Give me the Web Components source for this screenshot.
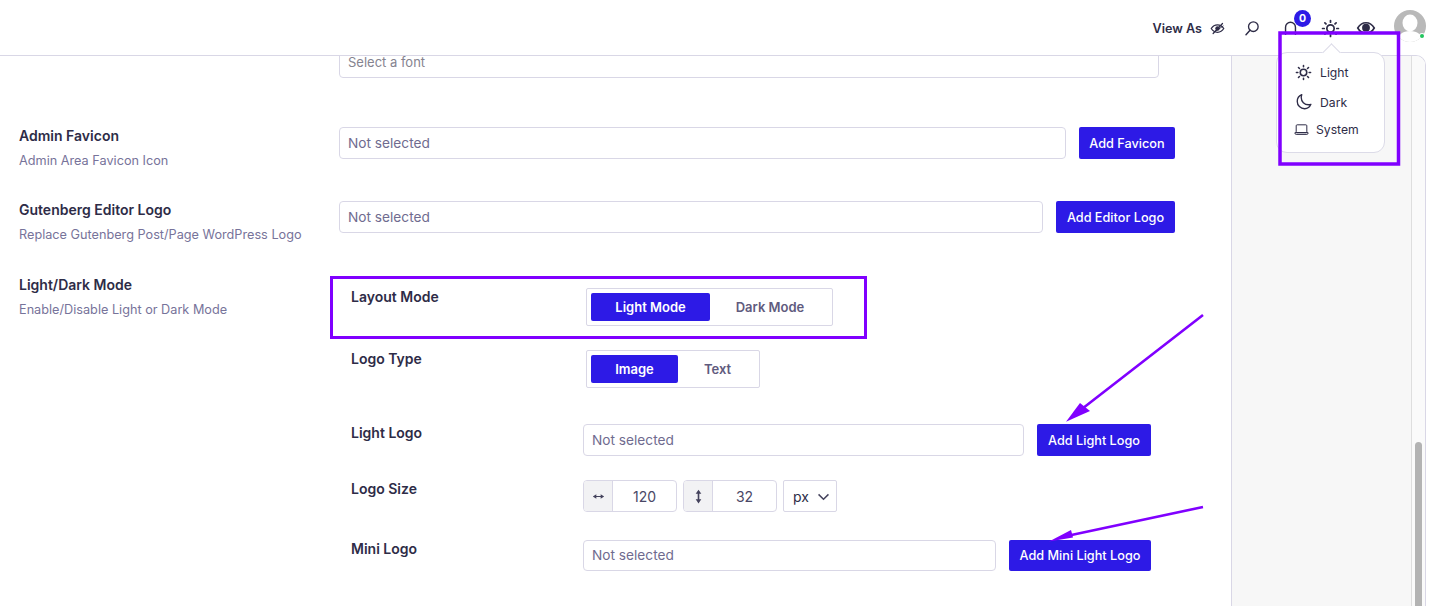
<!DOCTYPE html>
<html lang="en">
<head>
<meta charset="utf-8">
<title>Settings</title>
<style>
  html, body { margin: 0; padding: 0; background: #fff; }
  body { width: 1438px; height: 606px; overflow: hidden; font-family: Inter, "Liberation Sans", sans-serif; color: #2e2c47; }
</style>
</head>
<body>
<app-shell>
  <top-bar slot="top"></top-bar>
  <theme-menu slot="top"></theme-menu>

  <settings-list slot="main">
    <setting-row class="clipped">
      <file-field placeholder="Select a font" faint style="margin-right:16px"></file-field>
    </setting-row>
    <setting-row label="Admin Favicon" desc="Admin Area Favicon Icon">
      <file-field placeholder="Not selected" button="Add Favicon" bw="96"></file-field>
    </setting-row>
    <setting-row label="Gutenberg Editor Logo" desc="Replace Gutenberg Post/Page WordPress Logo" style="margin-bottom:1px">
      <file-field placeholder="Not selected" button="Add Editor Logo" bw="119"></file-field>
    </setting-row>
    <setting-row label="Light/Dark Mode" desc="Enable/Disable Light or Dark Mode">
      <div style="padding:12px 24px 0 12px">
        <sub-row label="Layout Mode" gap="24">
          <seg-toggle first="Light Mode" second="Dark Mode" a="119" b="118"></seg-toggle>
        </sub-row>
        <sub-row label="Logo Type" gap="36">
          <seg-toggle first="Image" second="Text" a="87" b="77"></seg-toggle>
        </sub-row>
        <sub-row label="Light Logo" gap="24">
          <file-field placeholder="Not selected" button="Add Light Logo" bw="114"></file-field>
        </sub-row>
        <sub-row label="Logo Size" gap="28">
          <size-field></size-field>
        </sub-row>
        <sub-row label="Mini Logo" gap="0">
          <file-field placeholder="Not selected" button="Add Mini Light Logo" bw="142" style="height:31px"></file-field>
        </sub-row>
      </div>
    </setting-row>
  </settings-list>

  <side-panel slot="side"></side-panel>
  <annot-layer slot="top"></annot-layer>
</app-shell>

<script>
const ICONS = {
  eyeoff: '<path d="M2 12s3.600-6 10-6 10 6 10 6-3.600 6-10 6S2 12 2 12Z" fill="none" stroke="currentColor" stroke-width="2"/><circle cx="12" cy="12" r="3.600" fill="currentColor"/><path d="M5 20 20 4" stroke="currentColor" stroke-width="2" stroke-linecap="round"/><path d="M8 17 21 8" stroke="currentColor" stroke-width="1.400" stroke-linecap="round"/>',
  search: '<circle cx="14" cy="10" r="7.200" fill="none" stroke="currentColor" stroke-width="2"/><path d="M9 15.500 3 22" stroke="currentColor" stroke-width="2.200" stroke-linecap="round"/>',
  bell: '<path d="M5 24v-11a7 7 0 0 1 14 0v11" fill="none" stroke="currentColor" stroke-width="2"/>',
  sun: '<circle cx="12" cy="12" r="4.600" fill="none" stroke="currentColor" stroke-width="2.200"/><path d="M12 2v2M12 20v2M2 12h2M20 12h2M4.900 4.900l1.400 1.400M17.700 17.700l1.400 1.400M4.900 19.100l1.400-1.400M17.700 6.300l1.400-1.400" fill="none" stroke="currentColor" stroke-width="2.200" stroke-linecap="round"/>',
  eye: '<path d="M1 12s4-7 11-7 11 7 11 7-4 7-11 7S1 12 1 12Z" fill="none" stroke="currentColor" stroke-width="2.200"/><circle cx="12" cy="11.500" r="5.200" fill="currentColor"/>',
  moon: '<path d="M21.200 15.100A9.700 9.700 0 0 1 18 15.700c-5.400 0-9.700-4.300-9.700-9.700 0-1.300.3-2.600.7-3.700A9.700 9.700 0 0 0 3 11.300C3 16.600 7.400 21 12.800 21a9.700 9.700 0 0 0 8.400-5.900Z" fill="none" stroke="currentColor" stroke-width="1.800" stroke-linejoin="round"/>',
  laptop: '<rect x="3.500" y="4.500" width="17" height="12.500" rx="1.500" fill="none" stroke="currentColor" stroke-width="1.600"/><path d="M1.500 17h21v.8a2 2 0 0 1-2 2h-17a2 2 0 0 1-2-2Z" fill="none" stroke="currentColor" stroke-width="1.600" stroke-linejoin="round"/>',
  hsize: '<path d="M6 12h12" stroke="currentColor" stroke-width="2"/><path d="M1.500 12 8 8v8ZM22.500 12 16 8v8Z" fill="currentColor"/>',
  vsize: '<path d="M12 6v12" stroke="currentColor" stroke-width="2.600"/><path d="M12 1 16.500 7.500h-9ZM12 23 7.500 16.500h9Z" fill="currentColor"/>',
  chevron: '<path d="M5 9l7 7 7-7" fill="none" stroke="currentColor" stroke-width="2"/>'
};

class UiIcon extends HTMLElement {
  constructor() {
    super();
    const size = this.getAttribute('size') || 16;
    this.attachShadow({ mode: 'open' }).innerHTML = `
      <style>:host { display: inline-flex; flex: none; width: ${size}px; height: ${size}px; } svg { width: 100%; height: 100%; display: block; overflow: visible; }</style>
      <svg viewBox="0 0 24 24">${ICONS[this.getAttribute('name')]}</svg>`;
  }
}
customElements.define('ui-icon', UiIcon);

class AppShell extends HTMLElement {
  constructor() {
    super();
    this.attachShadow({ mode: 'open' }).innerHTML = `
      <style>
        :host { display: block; position: relative; width: 1438px; height: 606px; overflow: hidden; }
        .body { display: flex; width: 1426px; height: 551px; box-sizing: border-box;
          border-top: 1px solid #d9d7e6; border-right: 1px solid #d9d7e6; border-top-right-radius: 10px; overflow: hidden; }
        .main { width: 1231px; flex: none; overflow: hidden; background: #fff; }
        .side { flex: 1; display: flex; min-width: 0; }
      </style>
      <slot name="top"></slot>
      <div class="body">
        <div class="main"><slot name="main"></slot></div>
        <div class="side"><slot name="side"></slot></div>
      </div>`;
  }
}
customElements.define('app-shell', AppShell);

class TopBar extends HTMLElement {
  constructor() {
    super();
    this.attachShadow({ mode: 'open' }).innerHTML = `
      <style>
        :host { display: flex; align-items: center; justify-content: flex-end; height: 55px; box-sizing: border-box;
          padding: 0 12px 0 0; color: #2e2c47; background: #fff; }
        .view { display: flex; align-items: center; gap: 8px; font-size: 12.600px; font-weight: 600; margin-right: 19px; margin-top: 1px; }
        .bell { position: relative; width: 12px; height: 16px; margin: 0 25px 0 24px; }
        .badge { position: absolute; left: 10px; top: -10px; width: 17px; height: 17px; border-radius: 50%;
          background: #2d1ae6; color: #fff; font-size: 10.500px; font-weight: 700; display: flex; align-items: center; justify-content: center; }
        .avatar { position: relative; width: 32px; height: 32px; margin: -3px 0 0 19px; }
        .avatar svg { display: block; width: 32px; height: 32px; }
        .dot { position: absolute; right: 2px; bottom: 4px; width: 4px; height: 4px; border-radius: 50%; background: #22c55e; box-shadow: 0 0 0 1px #fff; }
      </style>
      <div class="view">View As <ui-icon name="eyeoff" size="15"></ui-icon></div>
      <ui-icon name="search" size="16"></ui-icon>
      <div class="bell"><ui-icon name="bell" size="17" style="position:absolute;left:-2.500px;top:-1.750px"></ui-icon><span class="badge">0</span></div>
      <ui-icon name="sun" size="19" style="margin-top:1px"></ui-icon>
      <ui-icon name="eye" size="18" style="margin:1px 0 0 17px"></ui-icon>
      <div class="avatar">
        <svg viewBox="0 0 32 32">
          <defs><clipPath id="c"><circle cx="16" cy="16" r="16"/></clipPath></defs>
          <circle cx="16" cy="16" r="16" fill="#b9b9b9"/>
          <g clip-path="url(#c)" fill="#fff">
            <ellipse cx="16" cy="13" rx="7.500" ry="8.500"/>
            <path d="M3 34c0-9 5-13 13-13s13 4 13 13Z"/>
          </g>
        </svg>
        <span class="dot"></span>
      </div>`;
  }
}
customElements.define('top-bar', TopBar);

class ThemeMenu extends HTMLElement {
  constructor() {
    super();
    this.attachShadow({ mode: 'open' }).innerHTML = `
      <style>
        :host { display: flex; flex-direction: column; position: absolute; z-index: 5; left: 1276px; top: 52px; width: 109px; height: 101px;
          box-sizing: border-box; padding: 4px 0 0 0; background: #fff; border: 1px solid #dcdbe8; border-radius: 11px; color: #2e2c47; font-size: 12.200px; }
        :host::before { content: ""; position: absolute; left: 48px; top: -7px; width: 12px; height: 12px; background: #fff;
          border-left: 1px solid #dcdbe8; border-top: 1px solid #dcdbe8; transform: rotate(45deg); }
        .item { display: flex; align-items: center; gap: 8px; height: 30px; padding-left: 18px; position: relative; }
        .item.moon { gap: 7px; padding-left: 18px; }
        .item.sys { height: 24px; padding-left: 17px; gap: 7px; }
      </style>
      <div class="item"><ui-icon name="sun" size="17"></ui-icon>Light</div>
      <div class="item moon"><ui-icon name="moon" size="18"></ui-icon>Dark</div>
      <div class="item sys"><ui-icon name="laptop" size="15"></ui-icon>System</div>`;
  }
}
customElements.define('theme-menu', ThemeMenu);

class SettingsList extends HTMLElement {
  constructor() {
    super();
    this.attachShadow({ mode: 'open' }).innerHTML = `
      <style>:host { display: flex; flex-direction: column; gap: 31px; margin-top: -10px; padding: 0 56px 0 19px; }
        ::slotted(.clipped) { margin-bottom: 18px; }</style>
      <slot></slot>`;
  }
}
customElements.define('settings-list', SettingsList);

class SettingRow extends HTMLElement {
  constructor() {
    super();
    const label = this.getAttribute('label') || '';
    const desc = this.getAttribute('desc') || '';
    this.attachShadow({ mode: 'open' }).innerHTML = `
      <style>
        :host { display: grid; grid-template-columns: 320px 1fr; }
        h4 { margin: 0; font-size: 14px; line-height: 18px; font-weight: 600; color: #2e2c47; }
        p { margin: 7px 0 0; font-size: 12.700px; line-height: 18px; color: #77739a; }
      </style>
      <div>${label ? `<h4>${label}</h4><p>${desc}</p>` : ''}</div>
      <div><slot></slot></div>`;
  }
}
customElements.define('setting-row', SettingRow);

class SubRow extends HTMLElement {
  constructor() {
    super();
    this.attachShadow({ mode: 'open' }).innerHTML = `
      <style>
        :host { display: grid; grid-template-columns: 232px 1fr; margin-bottom: ${this.getAttribute('gap') || 0}px; }
        .l { font-size: 14px; line-height: 18px; font-weight: 600; color: #2e2c47; }
      </style>
      <div class="l">${this.getAttribute('label')}</div>
      <div><slot></slot></div>`;
  }
}
customElements.define('sub-row', SubRow);

class FileField extends HTMLElement {
  constructor() {
    super();
    const btn = this.getAttribute('button');
    const faint = this.hasAttribute('faint');
    this.attachShadow({ mode: 'open' }).innerHTML = `
      <style>
        :host { display: flex; gap: 13px; height: 32px; }
        .input { flex: 1; min-width: 0; box-sizing: border-box; border: 1px solid #d9d7e6; border-radius: 4px; background: #fff;
          padding: 0 8px 1px; display: flex; align-items: center; font-size: ${faint ? 13 : 13.700}px; color: ${faint ? '#85838f' : '#6f6b8f'}; }
        button { flex: none; width: ${this.getAttribute('bw') || 96}px; border: 0; border-radius: 2px; background: #2d1ae6; color: #fff; font: 500 12.700px Inter, "Liberation Sans", sans-serif; padding: 0; }
      </style>
      <div class="input">${this.getAttribute('placeholder')}</div>
      ${btn ? `<button>${btn}</button>` : ''}`;
  }
}
customElements.define('file-field', FileField);

class SegToggle extends HTMLElement {
  constructor() {
    super();
    const a = this.getAttribute('a'), b = this.getAttribute('b');
    this.attachShadow({ mode: 'open' }).innerHTML = `
      <style>
        :host { display: inline-flex; margin-left: 3px; box-sizing: border-box; height: 38px; padding: 4px; border: 1px solid #d9d7e6; border-radius: 2px; background: #fff; vertical-align: top; }
        span { display: flex; align-items: center; justify-content: center; font-size: 13px; font-weight: 600; color: #5f5b7e; border-radius: 2px; }
        .on { background: #2d1ae6; color: #fff; }
      </style>
      <span class="on" style="width:${a}px">${this.getAttribute('first')}</span>
      <span style="width:${b}px;padding-left:2px;box-sizing:border-box">${this.getAttribute('second')}</span>`;
  }
}
customElements.define('seg-toggle', SegToggle);

class SizeField extends HTMLElement {
  constructor() {
    super();
    const group = (icon, val) => `
      <div class="group"><div class="addon"><ui-icon name="${icon}" size="${icon === 'hsize' ? 13 : 15}"></ui-icon></div><div class="val">${val}</div></div>`;
    this.attachShadow({ mode: 'open' }).innerHTML = `
      <style>
        :host { display: flex; gap: 6px; height: 32px; color: #4a4766; font-size: 14px; }
        .group { display: flex; width: 94px; box-sizing: border-box; border: 1px solid #d9d7e6; border-radius: 4px; overflow: hidden; }
        .addon { width: 28px; flex: none; display: flex; align-items: center; justify-content: center; background: #f2f2f4; border-right: 1px solid #d9d7e6; color: #44425c; }
        .val { flex: 1; display: flex; align-items: center; justify-content: center; }
        .unit { width: 54px; box-sizing: border-box; border: 1px solid #d9d7e6; border-radius: 2px; display: flex; align-items: center; gap: 6px; padding-left: 9px; color: #2e2c47; }
        .unit ui-icon { color: #44425c; }
      </style>
      ${group('hsize', '120')}
      ${group('vsize', '32')}
      <div class="unit">px <ui-icon name="chevron" size="17"></ui-icon></div>`;
  }
}
customElements.define('size-field', SizeField);

class SidePanel extends HTMLElement {
  constructor() {
    super();
    this.attachShadow({ mode: 'open' }).innerHTML = `
      <style>
        :host { display: flex; flex: 1; border-left: 1px solid #d9d7e6; background: #f7f7f7; }
        .area { flex: 1; }
        .track { width: 14px; box-sizing: border-box; border-left: 1px solid #dedede; background: #fafafa; padding: 386px 3px 0 3px; }
        .thumb { height: 300px; border-radius: 4px; background: #b3b3b3; }
      </style>
      <div class="area"></div>
      <div class="track"><div class="thumb"></div></div>`;
  }
}
customElements.define('side-panel', SidePanel);

class AnnotLayer extends HTMLElement {
  constructor() {
    super();
    this.attachShadow({ mode: 'open' }).innerHTML = `
      <style>:host { display: block; position: absolute; inset: 0; z-index: 10; pointer-events: none; } svg { display: block; }</style>
      <svg width="1438" height="606" viewBox="0 0 1438 606">
        <g fill="none" stroke="#8000ff">
          <rect x="1280" y="33" width="118.500" height="131" stroke-width="3.500"/>
          <rect x="331.500" y="277.500" width="534" height="60" stroke-width="3"/>
          <path d="M1203 315 1078 412M1203 507 1062 537" stroke-width="2.600"/>
        </g>
        <g fill="#8000ff">
          <path d="M1066 421.700 1080 403 1090 411Z"/>
          <path d="M1049 541.500 1071 530 1073 537.500Z"/>
        </g>
      </svg>`;
  }
}
customElements.define('annot-layer', AnnotLayer);
</script>
</body>
</html>
